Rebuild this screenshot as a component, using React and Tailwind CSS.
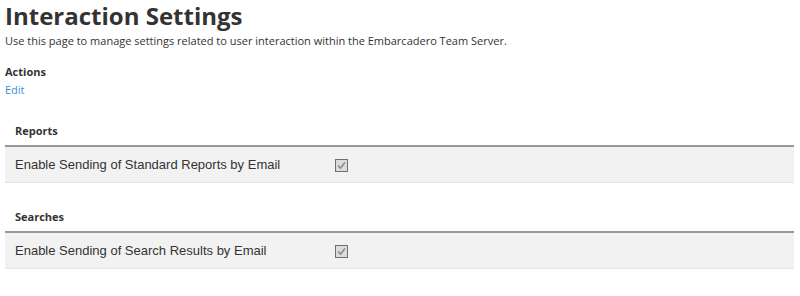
import React from 'react';

const sections = [
  { title: 'Reports', label: 'Enable Sending of Standard Reports by Email' },
  { title: 'Searches', label: 'Enable Sending of Search Results by Email' },
];

function Box() {
  return (
    <span className="inline-flex w-[13px] h-[13px] border border-[#6f6f6f] bg-[#dcdcdc] items-center justify-center">
      <svg width="11" height="11" viewBox="0 0 11 11">
        <path d="M2 5.5 L4.5 8 L9 2.5" fill="none" stroke="#8a8a8a" strokeWidth="1.6" />
      </svg>
    </span>
  );
}

export default function App() {
  return (
    <div className="w-[800px] h-[296px] bg-white text-[#333] px-[5px] font-['Open_Sans',sans-serif]">
      <h1 className="text-[24px] font-bold leading-[30px] pt-px">Interaction Settings</h1>
      <p className="text-[11px] leading-[16px] mt-[2px]">Use this page to manage settings related to user interaction within the Embarcadero Team Server.</p>

      <div className="mt-[15px]">
        <h4 className="text-[11px] font-bold leading-[16px]">Actions</h4>
        <a className="text-[11px] leading-[16px] text-[#3d8fd6] block mt-[2px]">Edit</a>
      </div>

      <div className="mt-[25px] w-[789px]">
        {sections.map(s => (
          <div key={s.title} className="mb-[26px]">
            <div className="px-[10px] text-[11px] font-bold leading-[16px] pb-[6px]">{s.title}</div>
            <div className="border-t-2 border-[#999] bg-[#f2f2f2] border-b border-b-[#e6e6e6] h-[38px] flex items-center px-[10px] pt-px font-['Liberation_Sans',sans-serif] text-[13px]">
              <span className="w-[320px]">{s.label}</span>
              <Box />
            </div>
          </div>
        ))}
      </div>
    </div>
  );
}
